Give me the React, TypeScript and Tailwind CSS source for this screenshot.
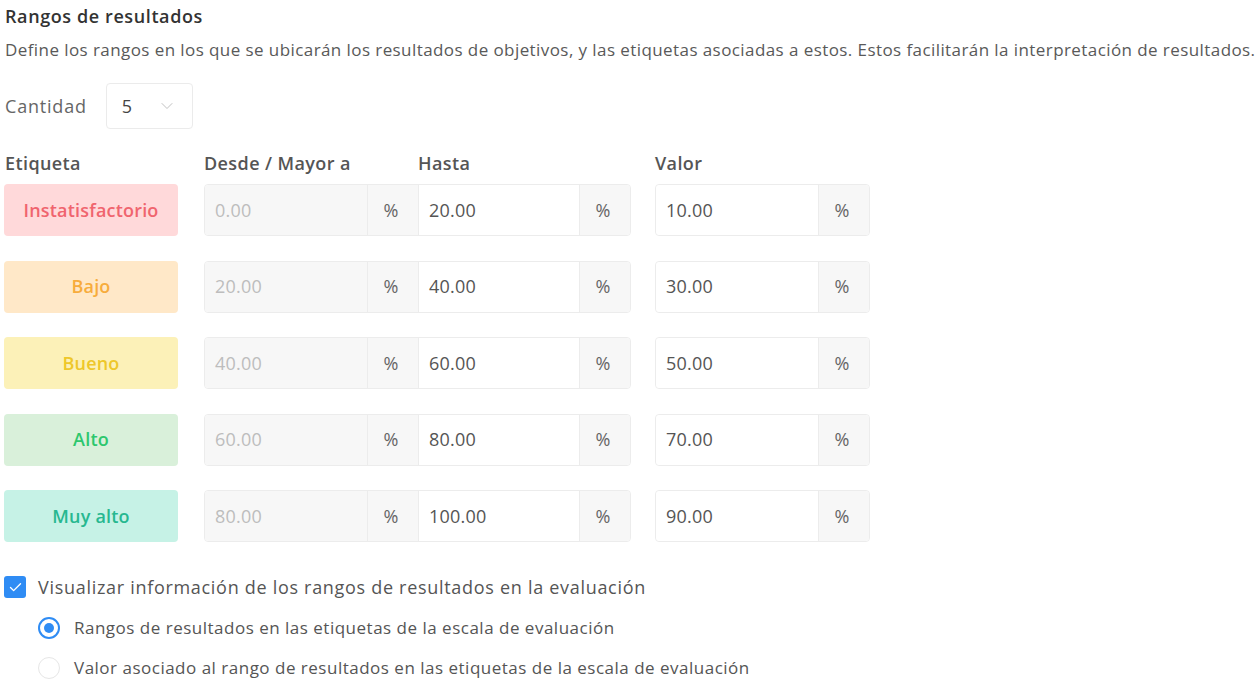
import { Check, ChevronDown } from 'lucide-react';

const rows = [
  { label: 'Instatisfactorio', bg: 'bg-[#ffd9da]', fg: 'text-[#f0646e]', from: '0.00', to: '20.00', value: '10.00' },
  { label: 'Bajo', bg: 'bg-[#ffe8c8]', fg: 'text-[#f7ac3c]', from: '20.00', to: '40.00', value: '30.00' },
  { label: 'Bueno', bg: 'bg-[#fcf1b8]', fg: 'text-[#eec72a]', from: '40.00', to: '60.00', value: '50.00' },
  { label: 'Alto', bg: 'bg-[#d9f0da]', fg: 'text-[#2dc76d]', from: '60.00', to: '80.00', value: '70.00' },
  { label: 'Muy alto', bg: 'bg-[#c6f2e6]', fg: 'text-[#27b890]', from: '80.00', to: '100.00', value: '90.00' },
];

function Addon({ className = '' }: { className?: string }) {
  return (
    <div className={`flex w-[51px] items-center justify-center pr-[4px] bg-[#f7f7f7] text-[#666] ${className}`}>%</div>
  );
}

export default function App() {
  return (
    <div
      className="min-h-screen bg-white px-[5px] text-[#333]"
      style={{ fontFamily: '"Open Sans", "Noto Sans", sans-serif' }}
    >
      <h2 className="pt-[4px] text-[18px] font-semibold leading-[24px] tracking-[0.6px] text-[#333]">
        Rangos de resultados
      </h2>
      <p className="mt-[10px] whitespace-nowrap text-[17px] leading-[24px] tracking-[0.42px] text-[#595959]">
        Define los rangos en los que se ubicarán los resultados de objetivos, y las etiquetas asociadas a estos. Estos facilitarán la interpretación de resultados.
      </p>

      <div className="mt-[21px] flex items-center gap-[19px]">
        <span className="text-[18px] tracking-[0.8px] text-[#666]">Cantidad</span>
        <div className="flex h-[46px] w-[87px] items-center justify-between rounded-[4px] border border-[#ebebeb] pl-[15px] pr-[15px] text-[18px] text-[#444]">
          <span>5</span>
          <ChevronDown className="h-[20px] w-[20px] text-[#bbb]" strokeWidth={1.1} />
        </div>
      </div>

      <div className="mt-[22px] flex text-[18px] font-semibold leading-[24px] tracking-[0.4px] text-[#555]">
        <div className="w-[199px]">Etiqueta</div>
        <div className="w-[214px]">Desde / Mayor a</div>
        <div className="w-[237px]">Hasta</div>
        <div>Valor</div>
      </div>

      <div className="mt-[9px] flex flex-col gap-[24.5px]">
        {rows.map((r) => (
          <div key={r.label} className="flex h-[52px] text-[18px] tracking-[0.2px]">
            <div
              className={`ml-[-1px] flex w-[174px] items-center justify-center rounded-[4px] font-semibold tracking-[0.2px] ${r.bg} ${r.fg}`}
            >
              {r.label}
            </div>
            <div className="ml-[26px] flex rounded-[4px] border border-[#ececec]">
              <div className="flex w-[162px] items-center rounded-l-[4px] bg-[#f7f7f7] pl-[10px] text-[#bdbdbd]">
                {r.from}
              </div>
              <Addon className="border-l border-[#ececec]" />
              <div className="flex w-[161px] items-center border-l border-[#ececec] bg-white pl-[10px] text-[#555]">
                {r.to}
              </div>
              <Addon className="rounded-r-[4px] border-l border-[#ececec]" />
            </div>
            <div className="ml-[24px] flex rounded-[4px] border border-[#ececec]">
              <div className="flex w-[162px] items-center rounded-l-[4px] bg-white pl-[10px] text-[#555]">
                {r.value}
              </div>
              <Addon className="rounded-r-[4px] border-l border-[#ececec]" />
            </div>
          </div>
        ))}
      </div>

      <label className="mt-[33px] flex items-center gap-[12px] text-[18px] leading-[24px] tracking-[0.7px] text-[#555]">
        <span className="ml-[-1px] flex h-[22px] w-[22px] items-center justify-center rounded-[3px] bg-[#2f8cf4]">
          <Check className="h-[15px] w-[15px] text-white" strokeWidth={2.2} />
        </span>
        Visualizar información de los rangos de resultados en la evaluación
      </label>

      <div className="ml-[33px] mt-[17px] flex flex-col gap-[16px] text-[17px] leading-[24px] tracking-[0.5px] text-[#555]">
        <label className="flex items-center gap-[14px]">
          <span className="flex h-[22px] w-[22px] items-center justify-center rounded-full border-[2px] border-[#2f8cf4]">
            <span className="h-[10px] w-[10px] rounded-full bg-[#2f8cf4]" />
          </span>
          Rangos de resultados en las etiquetas de la escala de evaluación
        </label>
        <label className="flex items-center gap-[14px]">
          <span className="h-[22px] w-[22px] rounded-full border border-[#e6e6e6]" />
          Valor asociado al rango de resultados en las etiquetas de la escala de evaluación
        </label>
      </div>
    </div>
  );
}
